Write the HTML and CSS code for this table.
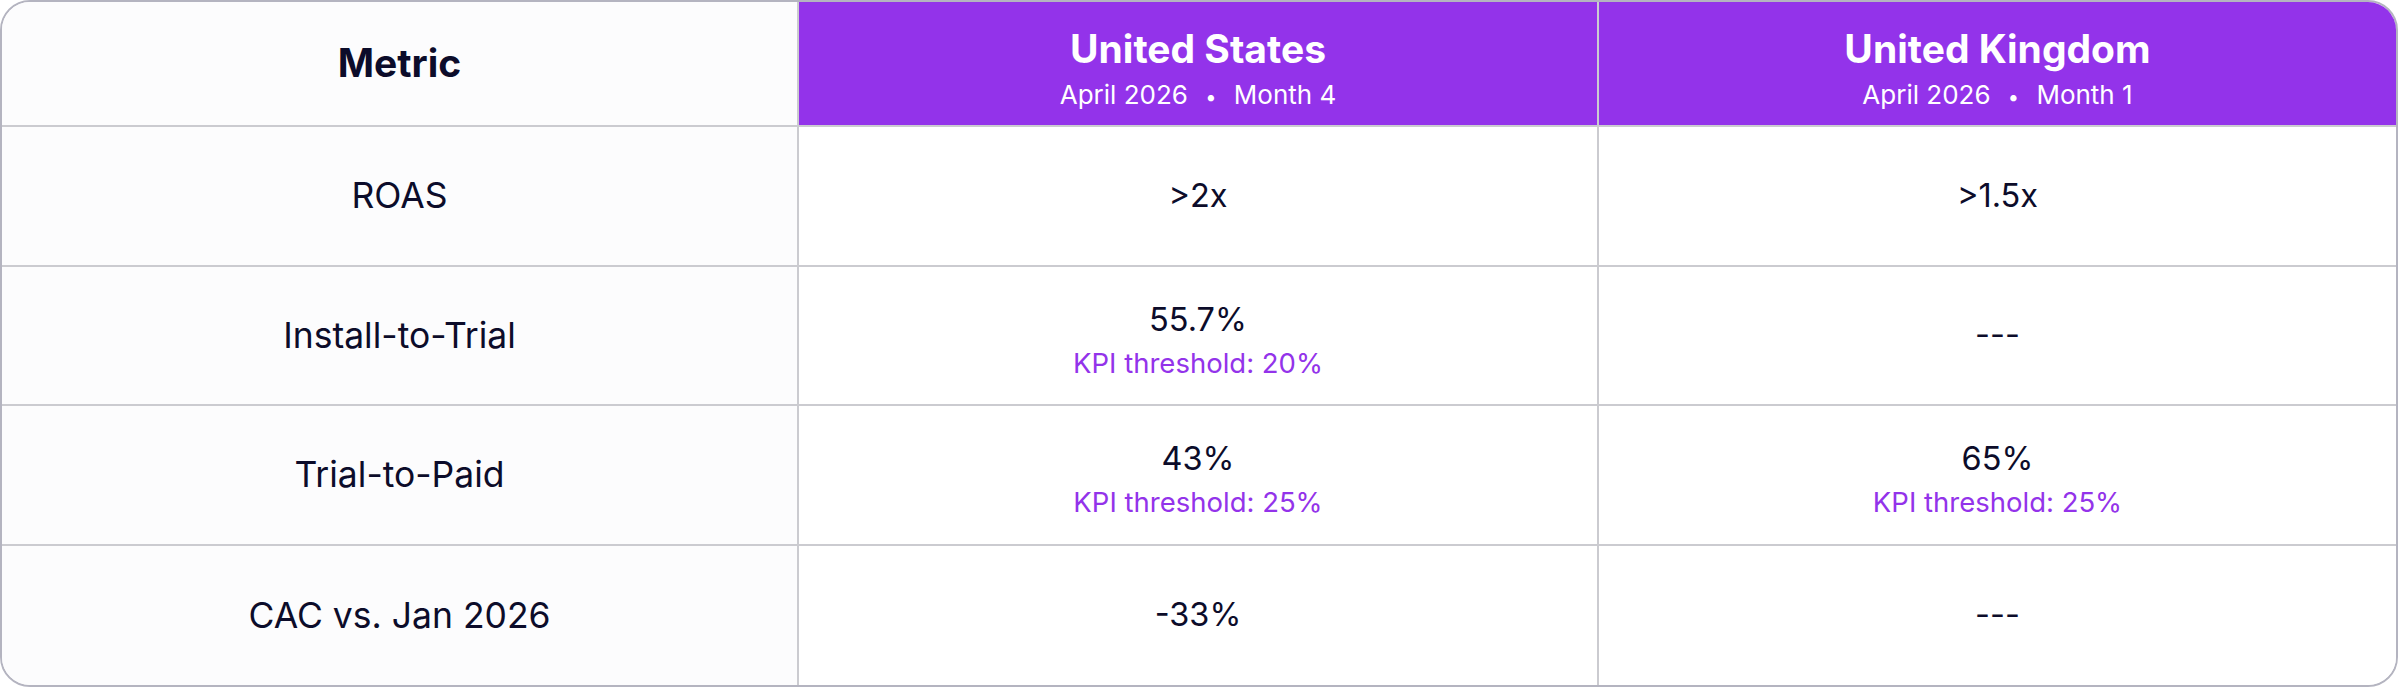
FILE: index.html
```html
<!DOCTYPE html>
<html lang="en">
<head>
<meta charset="utf-8">
<title>KPI comparison</title>
<link rel="stylesheet" href="styles.css">
</head>
<body>
<div class="table">
  <div class="cell head metric-head"><span class="title dark">Metric</span></div>
  <div class="cell head market">
    <span class="title">United States</span>
    <span class="sub">April 2026 <span class="dot">•</span> Month 4</span>
  </div>
  <div class="cell head market last">
    <span class="title">United Kingdom</span>
    <span class="sub">April 2026 <span class="dot">•</span> Month 1</span>
  </div>

  <div class="cell label">ROAS</div>
  <div class="cell value"><span class="num">&gt;2x</span></div>
  <div class="cell value last"><span class="num">&gt;1.5x</span></div>

  <div class="cell label">Install-to-Trial</div>
  <div class="cell value two"><span class="num">55.7%</span><span class="kpi">KPI threshold: 20%</span></div>
  <div class="cell value last"><span class="num">---</span></div>

  <div class="cell label">Trial-to-Paid</div>
  <div class="cell value two"><span class="num">43%</span><span class="kpi">KPI threshold: 25%</span></div>
  <div class="cell value two last"><span class="num">65%</span><span class="kpi">KPI threshold: 25%</span></div>

  <div class="cell label bottom">CAC vs. Jan 2026</div>
  <div class="cell value bottom"><span class="num">-33%</span></div>
  <div class="cell value bottom last"><span class="num">---</span></div>
</div>
</body>
</html>
```
FILE: styles.css
```css
html, body {
  margin: 0;
  padding: 0;
  background: #ffffff;
}
body {
  font-family: "Inter", "Noto Sans", sans-serif;
  color: #0c0c2a;
}
.table {
  box-sizing: border-box;
  width: 2398px;
  height: 687px;
  border: 2px solid #b4b4c0;
  border-radius: 30px;
  overflow: hidden;
  display: grid;
  grid-template-columns: 797px 800px 1fr;
  grid-template-rows: 125px repeat(4, 1fr);
  background: #fcfcfd;
}
.cell {
  box-sizing: border-box;
  display: flex;
  flex-direction: column;
  align-items: center;
  justify-content: center;
  border-right: 2px solid #cbcbd0;
  border-bottom: 2px solid #cbcbd0;
  text-align: center;
}
.cell.last { border-right: none; }
.cell.bottom { border-bottom: none; }
.head.market {
  background: #9333ea;
  color: #ffffff;
  padding-top: 12px;
}
.metric-head {
  background: #fcfcfd;
  padding-bottom: 2px;
}
.title {
  font-weight: 700;
  font-size: 39px;
  line-height: 46px;
}
.title.dark { color: #0c0c2a; }
.sub {
  font-size: 26px;
  line-height: 34px;
  margin-top: 6px;
}
.dot {
  display: inline-block;
  margin: 0 10px;
  font-size: 20px;
}
.label {
  font-size: 35.5px;
  background: #fcfcfd;
}
.value { background: #ffffff; }
.value.two { padding-top: 10px; }
.num {
  font-size: 32.5px;
  line-height: 42px;
}
.kpi {
  font-size: 27.5px;
  line-height: 38px;
  margin-top: 3px;
  color: #9333ea;
}
```
